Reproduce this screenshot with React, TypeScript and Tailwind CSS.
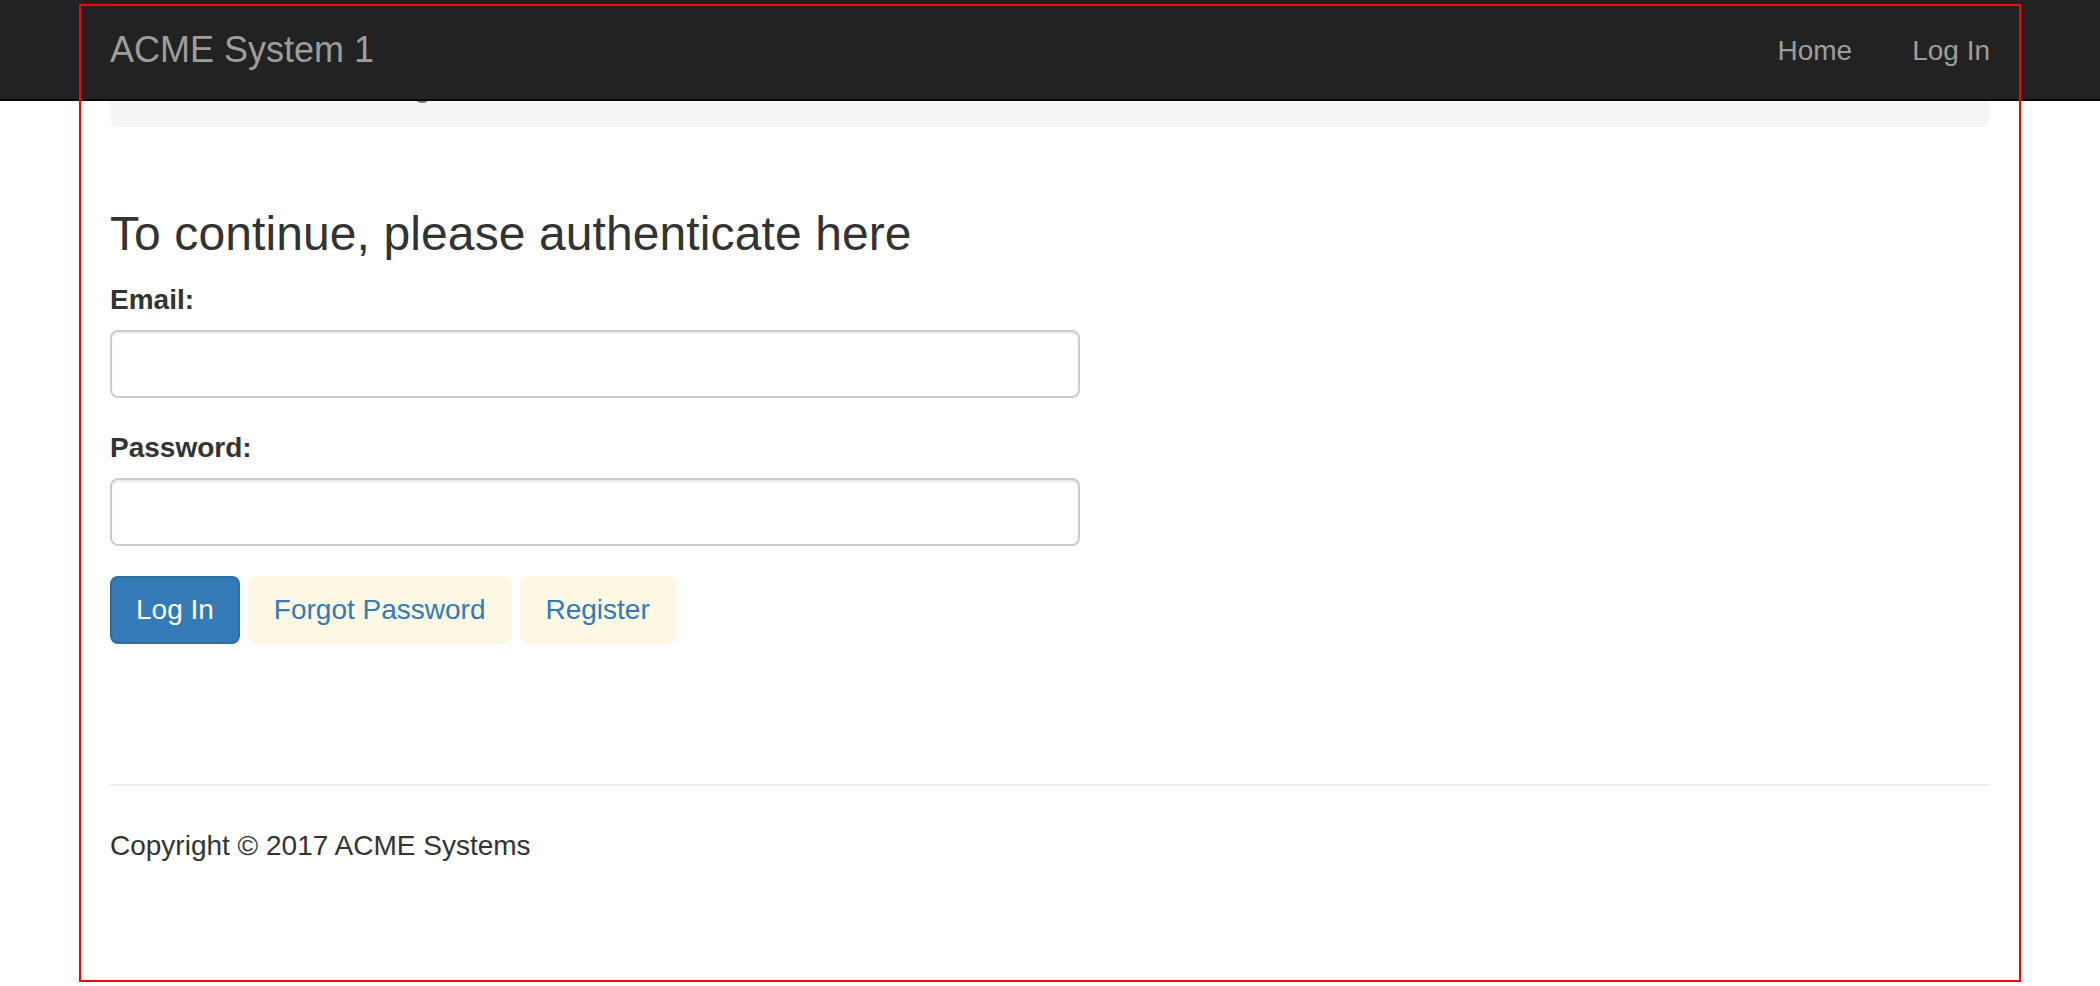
import React from "react";

export default function App() {
  return (
    <div
      className="relative min-h-[986px] w-full bg-white text-[#333] overflow-hidden"
      style={{ fontFamily: '"Liberation Sans", Arial, sans-serif' }}
    >
      {/* Fixed navbar */}
      <nav className="fixed top-0 left-0 right-0 z-10 h-[101px] bg-[#222] border-b-2 border-[#080808]">
        <div className="mx-auto flex w-[1940px] items-start justify-between px-[30px]">
          <a className="block pt-[30px] text-[36px] leading-[40px] text-[#9d9d9d]">ACME System 1</a>
          <ul className="flex">
            <li>
              <a className="block px-[30px] pt-[31px] text-[28px] leading-[40px] text-[#9d9d9d]">Home</a>
            </li>
            <li>
              <a className="block pl-[30px] pr-0 pt-[31px] text-[28px] leading-[40px] text-[#9d9d9d]">Log In</a>
            </li>
          </ul>
        </div>
      </nav>

      {/* Body content */}
      <div className="mx-auto w-[1940px] px-[30px] pt-[55px]">
        <ol className="flex gap-[13px] rounded-[8px] bg-[#f5f5f5] px-[30px] pt-[13px] pb-[19px] text-[28px] leading-[40px]">
          <li className="text-[#337ab7]">Home</li>
          <li className="text-[#ccc]">/</li>
          <li className="text-[#337ab7]">Account</li>
          <li className="text-[#ccc]">/</li>
          <li className="text-[#777]">Log In</li>
        </ol>

        <h3 className="mt-[81px] mb-[20px] text-[48px] leading-[52px] font-normal tracking-[0.1px] text-[#333]">
          To continue, please authenticate here
        </h3>

        <form className="w-[970px]" onSubmit={(e) => e.preventDefault()}>
          <div className="mb-[30px]">
            <label className="mb-[10px] block text-[28px] font-bold leading-[40px] text-[#333]">Email:</label>
            <input
              type="text"
              className="block h-[68px] w-full rounded-[8px] border-2 border-[#ccc] bg-white px-[24px] text-[28px] shadow-[inset_0_2px_2px_rgba(0,0,0,0.075)] outline-none"
            />
          </div>
          <div className="mb-[30px]">
            <label className="mb-[10px] block text-[28px] font-bold leading-[40px] text-[#333]">Password:</label>
            <input
              type="password"
              className="block h-[68px] w-full rounded-[8px] border-2 border-[#ccc] bg-white px-[24px] text-[28px] shadow-[inset_0_2px_2px_rgba(0,0,0,0.075)] outline-none"
            />
          </div>
          <div className="flex gap-[8px]">
            <button
              type="submit"
              className="rounded-[8px] border-2 border-[#2e6da4] bg-[#337ab7] px-[24px] py-[12px] text-[28px] leading-[40px] text-white"
            >
              Log In
            </button>
            <a className="rounded-[8px] border-2 border-[#fcf8e3] bg-[#fcf8e3] px-[24px] py-[12px] text-[28px] leading-[40px] text-[#337ab7]">
              Forgot Password
            </a>
            <a className="rounded-[8px] border-2 border-[#fcf8e3] bg-[#fcf8e3] px-[24px] py-[12px] text-[28px] leading-[40px] text-[#337ab7]">
              Register
            </a>
          </div>
        </form>

        <hr className="mt-[140px] border-0 border-t-2 border-[#eee]" />
        <footer>
          <p className="mt-[40px] text-[28px] leading-[40px] text-[#333]">Copyright © 2017 ACME Systems</p>
        </footer>
      </div>

      {/* Outline overlay */}
      <div className="pointer-events-none absolute left-[79px] top-[4px] z-20 h-[978px] w-[1942px] border-2 border-[#ff0000]" />
    </div>
  );
}
